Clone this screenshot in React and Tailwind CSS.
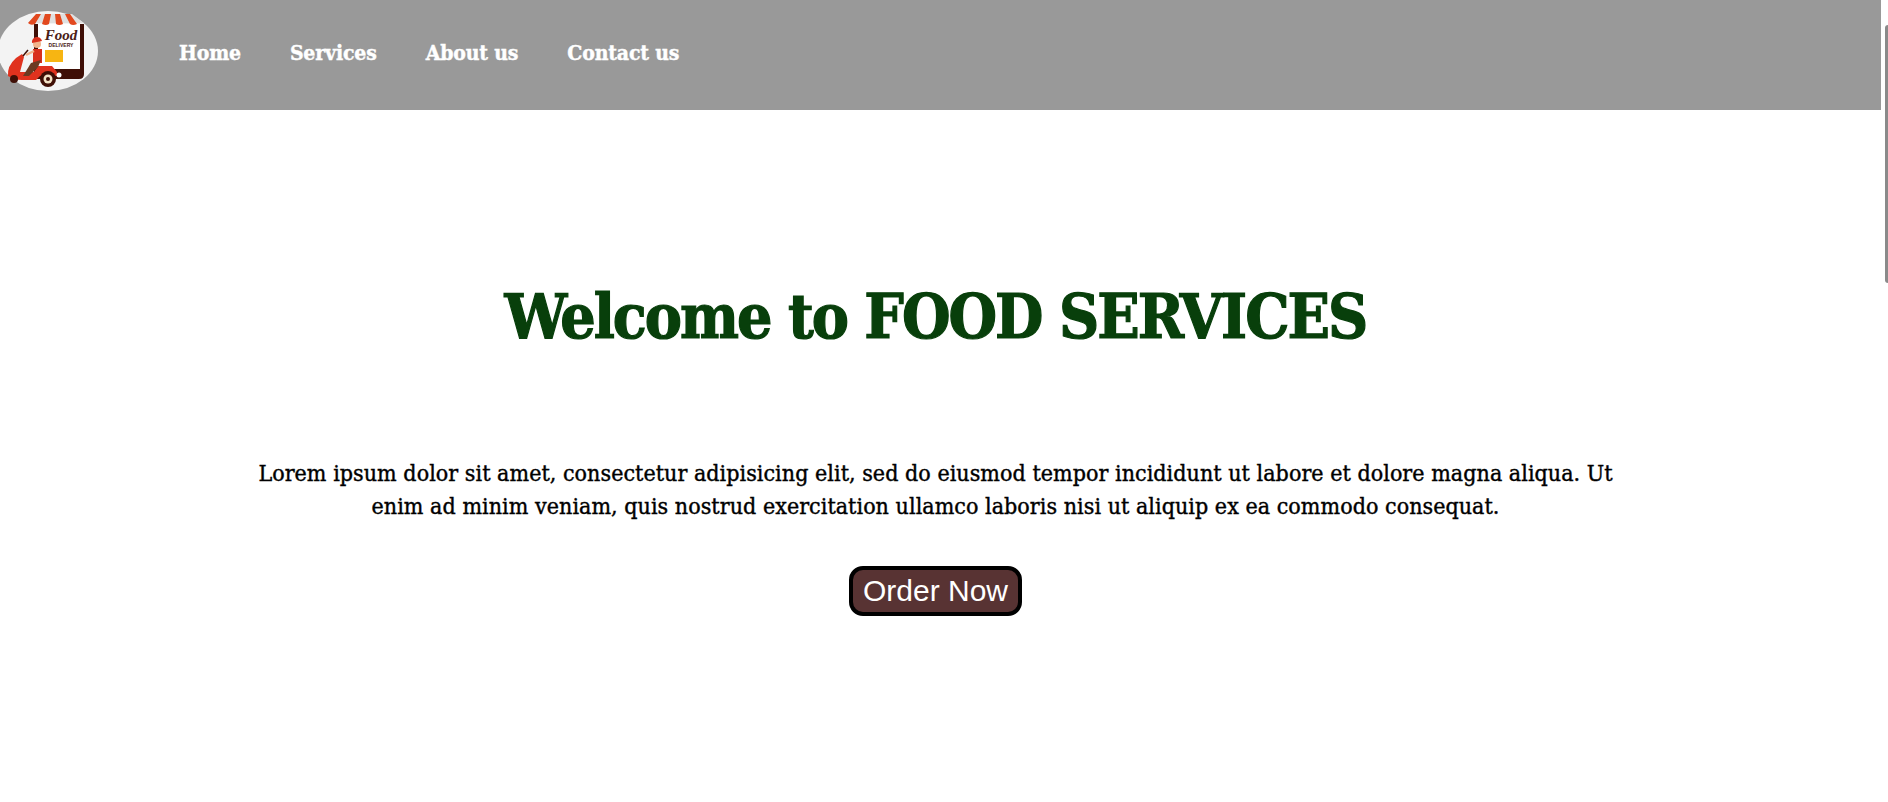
import React from "react";

const links = ["Home", "Services", "About us", "Contact us"];

function Logo() {
  return (
    <svg width="100" height="92" viewBox="0 0 100 92" className="block shrink-0">
      <ellipse cx="48" cy="51" rx="50" ry="40" fill="#f3f3f3" />
      {/* stall */}
      <path d="M34 24 H84 V74 Q84 79 79 79 H34 Z" fill="#3f0f06" />
      <path d="M38 24 H80 V69 H38 Z" fill="#ffffff" />
      <path d="M28 23 L38 14 H72 L84 23 Z" fill="#e0e0e0" />
      <path d="M28 23 Q31 26 35 24 L41 14 H36 Z M42 24 Q46 26 49 24 L51 14 H45 Z M56 24 Q59 26 63 24 L60 14 H55 Z M70 24 Q73 26 77 24 L70 14 H65 Z" fill="#e2491f" />
      <text x="61" y="40" textAnchor="middle" fontFamily="'Liberation Serif', serif" fontStyle="italic" fontWeight="700" fontSize="15" fill="#4a2016">Food</text>
      <text x="61" y="46.5" textAnchor="middle" fontFamily="'Liberation Sans', sans-serif" fontWeight="700" fontSize="5" fill="#4a2016">DELIVERY</text>
      <rect x="45" y="50" width="18" height="12" fill="#f7b512" />
      {/* scooter */}
      <path d="M8 76 Q7 66 16 58 L22 54 L24 57 L20 72 H34 L38 66 H52 L57 72 V76 H40 L36 80 H22 Q14 80 8 76 Z" fill="#e0321e" />
      <path d="M23 56 L28 50" stroke="#3f0f06" strokeWidth="1.5" />
      <circle cx="48" cy="79" r="8" fill="#3f0f06" />
      <circle cx="48" cy="79" r="4.5" fill="#f3e2c6" />
      <circle cx="48" cy="79" r="2" fill="#3f0f06" />
      <circle cx="14" cy="79" r="4" fill="#3f0f06" />
      <circle cx="59" cy="75" r="2.5" fill="#ffffff" />
      {/* rider */}
      <path d="M33 49 H42 V63 H33 Z" fill="#d9301c" />
      <path d="M41 60 L31 63 L23 76 H29 L38 67 Z" fill="#6b3a22" />
      <path d="M34 51 L26 55" stroke="#f0b48c" strokeWidth="2.5" />
      <circle cx="37" cy="44" r="4" fill="#f0b48c" />
      <path d="M32 43 A5 5 0 0 1 42 41 Z" fill="#d9301c" />
    </svg>
  );
}

export default function App() {
  return (
    <div className="relative h-[802px] overflow-hidden bg-white pr-[7px]">
      <nav className="flex h-[110px] items-start bg-[#999999]">
        <Logo />
        <ul className="ml-[79px] flex h-[106px] items-center gap-[49px] text-[21px] tracking-[-0.15px] font-bold text-white font-['DejaVu_Serif_Condensed','DejaVu_Serif',serif] [font-stretch:condensed] [-webkit-text-stroke:0.4px_white]">
          {links.map((link) => (
            <li key={link}>{link}</li>
          ))}
        </ul>
      </nav>

      <main className="flex flex-col items-center pr-[10px] text-center font-['DejaVu_Serif_Condensed','DejaVu_Serif',serif] [font-stretch:condensed]">
        <h1 className="mt-[171px] text-[62px] leading-[72px] font-bold text-[#083f0b] tracking-[-2px] [-webkit-text-stroke:1.2px_#083f0b]">
          Welcome to FOOD SERVICES
        </h1>
        <p className="mt-[104px] w-[1365px] text-[23px] leading-[33px] tracking-[0.04px] text-black [-webkit-text-stroke:0.4px_black]">
          Lorem ipsum dolor sit amet, consectetur adipisicing elit, sed do eiusmod tempor incididunt ut labore et dolore magna aliqua. Ut enim ad minim veniam, quis nostrud exercitation ullamco laboris nisi ut aliquip ex ea commodo consequat.
        </p>
        <button className="mt-[43px] rounded-[14px] border-4 border-black bg-[#583333] px-[10px] text-[30px] leading-[42px] text-white font-['Liberation_Sans',sans-serif]">
          Order Now
        </button>
      </main>

      <div className="absolute right-0 top-[25px] h-[258px] w-[3px] rounded-l-sm bg-[#8a8a8a]" />
    </div>
  );
}
